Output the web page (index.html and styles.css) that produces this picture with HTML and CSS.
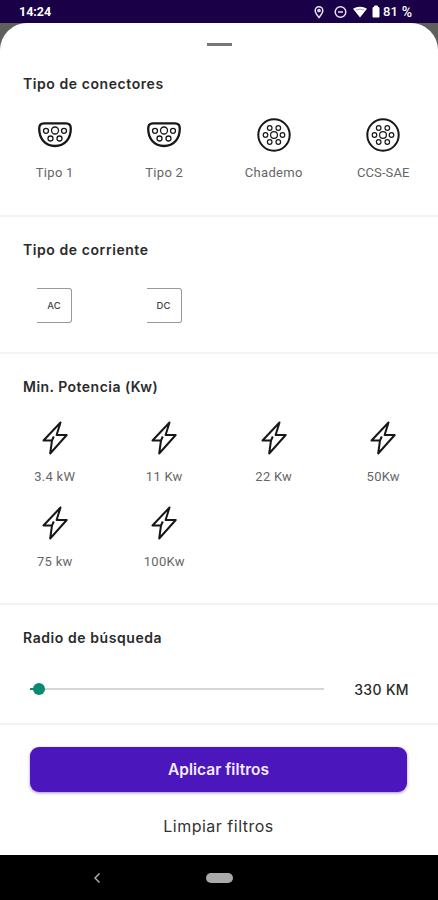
FILE: index.html
```html
<!DOCTYPE html>
<html lang="es">
<head>
<meta charset="utf-8">
<title>Filtros</title>
<link rel="stylesheet" href="styles.css">
</head>
<body>
<svg class="defs" aria-hidden="true">
  <symbol id="type" viewBox="0 0 34 34">
    <path d="M6 5.400h22c3 0 4.800 2 4.800 5C32.800 20.500 27 28 17 28S1.200 20.500 1.200 10.400c0-3 1.800-5 4.800-5Z" stroke-width="2.300"/>
    <g stroke-width="1.300"><circle cx="17" cy="12.500" r="3.500"/><circle cx="8" cy="12.800" r="2.500"/><circle cx="26" cy="12.800" r="2.500"/><circle cx="12.500" cy="20.500" r="2.500"/><circle cx="21.500" cy="20.500" r="2.500"/></g>
  </symbol>
  <symbol id="round" viewBox="0 0 34 34">
    <circle cx="17" cy="17" r="15.700" stroke-width="2"/>
    <g stroke-width="1.200"><circle cx="17" cy="17" r="3.400"/><circle cx="8.500" cy="17" r="2.300"/><circle cx="25.500" cy="17" r="2.300"/><circle cx="12.700" cy="10" r="2.300"/><circle cx="21.300" cy="10" r="2.300"/><circle cx="12.700" cy="24" r="2.300"/><circle cx="21.300" cy="24" r="2.300"/></g>
  </symbol>
  <symbol id="bolt" viewBox="0 0 34 34">
    <path d="M22.500 1.500 5.500 19.500h8.500L12.200 32.500 28.700 14H18.600ZM14 19.500l1.800-4" stroke-width="2"/>
  </symbol>
</svg>
<header class="status">
  <span class="time">14:24</span>
  <svg class="status-icons" viewBox="0 0 68 16">
    <g fill="none" stroke="#e8e2f5" stroke-width="1.500">
      <path d="M7 13.500C4.800 11 3.200 8.800 3.200 6.500a3.800 3.800 0 0 1 7.600 0C10.800 8.800 9.200 11 7 13.500Z"/><circle cx="7" cy="6.500" r="1.100"/>
      <circle cx="28.500" cy="8" r="5.300"/><path d="M26 8h5"/>
    </g>
    <path d="M41 4.800C45.200 1.900 50.800 1.900 55 4.800L48 13.500Z" fill="#fff"/>
    <path d="M44 6q4-2 8 0" stroke="#9183ad" stroke-width=".8" fill="none"/>
    <path d="M61 3.500h1.500V2h3v1.500H67V13h-6Z" fill="#fff" stroke="#fff"/>
  </svg>
  <span class="charge">81<span class="percent">%</span></span>
</header>
<main class="backdrop">
  <div class="sheet">
    <div class="handle"></div>
    <section class="connectors">
      <h2 class="t-con">Tipo de conectores</h2>
      <div class="grid">
        <div class="option"><svg><use href="#type"/></svg><span>Tipo 1</span></div>
        <div class="option"><svg><use href="#type"/></svg><span>Tipo 2</span></div>
        <div class="option"><svg><use href="#round"/></svg><span>Chademo</span></div>
        <div class="option"><svg><use href="#round"/></svg><span class="tight">CCS-SAE</span></div>
      </div>
    </section>
    <section class="current">
      <h2 class="t-cur">Tipo de corriente</h2>
      <div class="grid">
        <div class="box">AC</div>
        <div class="box">DC</div>
      </div>
    </section>
    <section class="power">
      <h2 class="t-pow">Min. Potencia (Kw)</h2>
      <div class="grid">
        <div class="option"><svg><use href="#bolt"/></svg><span>3.4 kW</span></div>
        <div class="option"><svg><use href="#bolt"/></svg><span>11 Kw</span></div>
        <div class="option"><svg><use href="#bolt"/></svg><span>22 Kw</span></div>
        <div class="option"><svg><use href="#bolt"/></svg><span>50Kw</span></div>
        <div class="option"><svg><use href="#bolt"/></svg><span>75 kw</span></div>
        <div class="option"><svg><use href="#bolt"/></svg><span>100Kw</span></div>
      </div>
    </section>
    <section class="radius">
      <h2 class="t-rad">Radio de búsqueda</h2>
      <div class="range">
        <div class="track"><span class="fill"></span><span class="thumb"></span></div>
        <span class="value">330 KM</span>
      </div>
    </section>
    <footer class="actions">
      <button class="apply">Aplicar filtros</button>
      <button class="clear">Limpiar filtros</button>
    </footer>
  </div>
</main>
<nav class="navbar">
  <svg class="back" viewBox="0 0 8 12"><path d="M6.500 1.500 2 6l4.500 4.500"/></svg>
  <span class="home"></span>
</nav>
</body>
</html>
```
FILE: styles.css
```css
* { box-sizing: border-box; }
body { margin: 0; width: 438px; height: 900px; overflow: hidden; display: flex; flex-direction: column; background: #000; font-family: Inter, sans-serif; color: #2b2b2b; }
.defs { position: absolute; width: 0; height: 0; }
.status { height: 23px; background: #190047; color: #fff; display: flex; align-items: center; padding: 0 26px 0 19px; font: 700 12.500px/22px Roboto, sans-serif; }
.status-icons { width: 68px; height: 16px; margin-left: auto; }
.charge { width: 29px; margin-left: 3px; font-weight: 500; font-size: 13px; display: flex; justify-content: space-between; }
.percent { font-size: 14px; }
.backdrop { height: 832px; background: #5f5f5c; }
.sheet { height: 832px; background: #fff; border-radius: 27px 27px 0 0; display: flex; flex-direction: column; }
.handle { width: 25px; height: 3px; margin: 20px auto 0; background: #777; flex: none; }
section { border-bottom: 2px solid #f3f3f3; flex: none; }
h2 { margin: 0 0 0 23px; font-size: 14px; line-height: 20px; font-weight: 600; white-space: nowrap; }
.connectors { height: 171px; padding-top: 28px; }
.current { height: 137px; padding-top: 23px; }
.power { height: 251px; padding-top: 23px; }
.radius { height: 120px; padding-top: 23px; }
.t-con { letter-spacing: .57px; }
.t-cur { letter-spacing: .57px; }
.t-pow { letter-spacing: .47px; }
.t-rad { letter-spacing: .57px; }
.grid { display: grid; grid-template-columns: repeat(4, 1fr); }
.connectors .grid { margin-top: 24px; }
.current .grid { margin-top: 28px; }
.power .grid { margin-top: 24px; row-gap: 19px; }
.option { display: flex; flex-direction: column; align-items: center; height: 66px; font: 400 13px/18px Roboto, sans-serif; letter-spacing: .3px; color: #666; }
.option svg { flex: none; width: 34px; height: 34px; fill: none; stroke: #171717; stroke-linejoin: round; margin-bottom: 12px; }
.power .option svg { margin-bottom: 13px; }
.option .tight { letter-spacing: .1px; }
.box { width: 35px; height: 35px; margin-left: 37px; border: 1px solid #999; border-left: 0; border-radius: 0 3px 3px 0; display: flex; align-items: center; justify-content: center; font-size: 9.500px; font-weight: 500; color: #444; }
.range { display: flex; align-items: center; height: 24px; margin: 29px 29px 0 30px; justify-content: space-between; }
.track { width: 294px; height: 12px; display: flex; align-items: center; background: linear-gradient(#d5d5d5, #d5d5d5) center / 100% 2px no-repeat; }
.fill { width: 4px; height: 2px; background: #0b8e73; }
.thumb { width: 12px; height: 12px; border-radius: 50%; background: #078b70; margin-left: -1px; }
.value { font-size: 14px; font-weight: 500; letter-spacing: .35px; }
.actions { padding: 22px 31px 0 30px; display: flex; flex-direction: column; }
button { border: 0; padding: 0; font: 600 15.500px/20px Inter, sans-serif; }
.apply { height: 45px; border-radius: 9px; background: #4c16bd; color: #f3edff; box-shadow: 0 1px 3px #4c16bd80; }
.clear { height: 24px; margin-top: 22px; background: none; color: #333; font-weight: 400; font-size: 16px; letter-spacing: .5px; }
.navbar { height: 45px; background: #000; display: grid; grid-template-columns: 193px 52px 193px; align-items: center; justify-items: center; }
.back { width: 8px; height: 12px; fill: none; stroke: #aaa; stroke-width: 1.500; }
.home { width: 27px; height: 10px; border-radius: 5px; background: #aaa; }
```
